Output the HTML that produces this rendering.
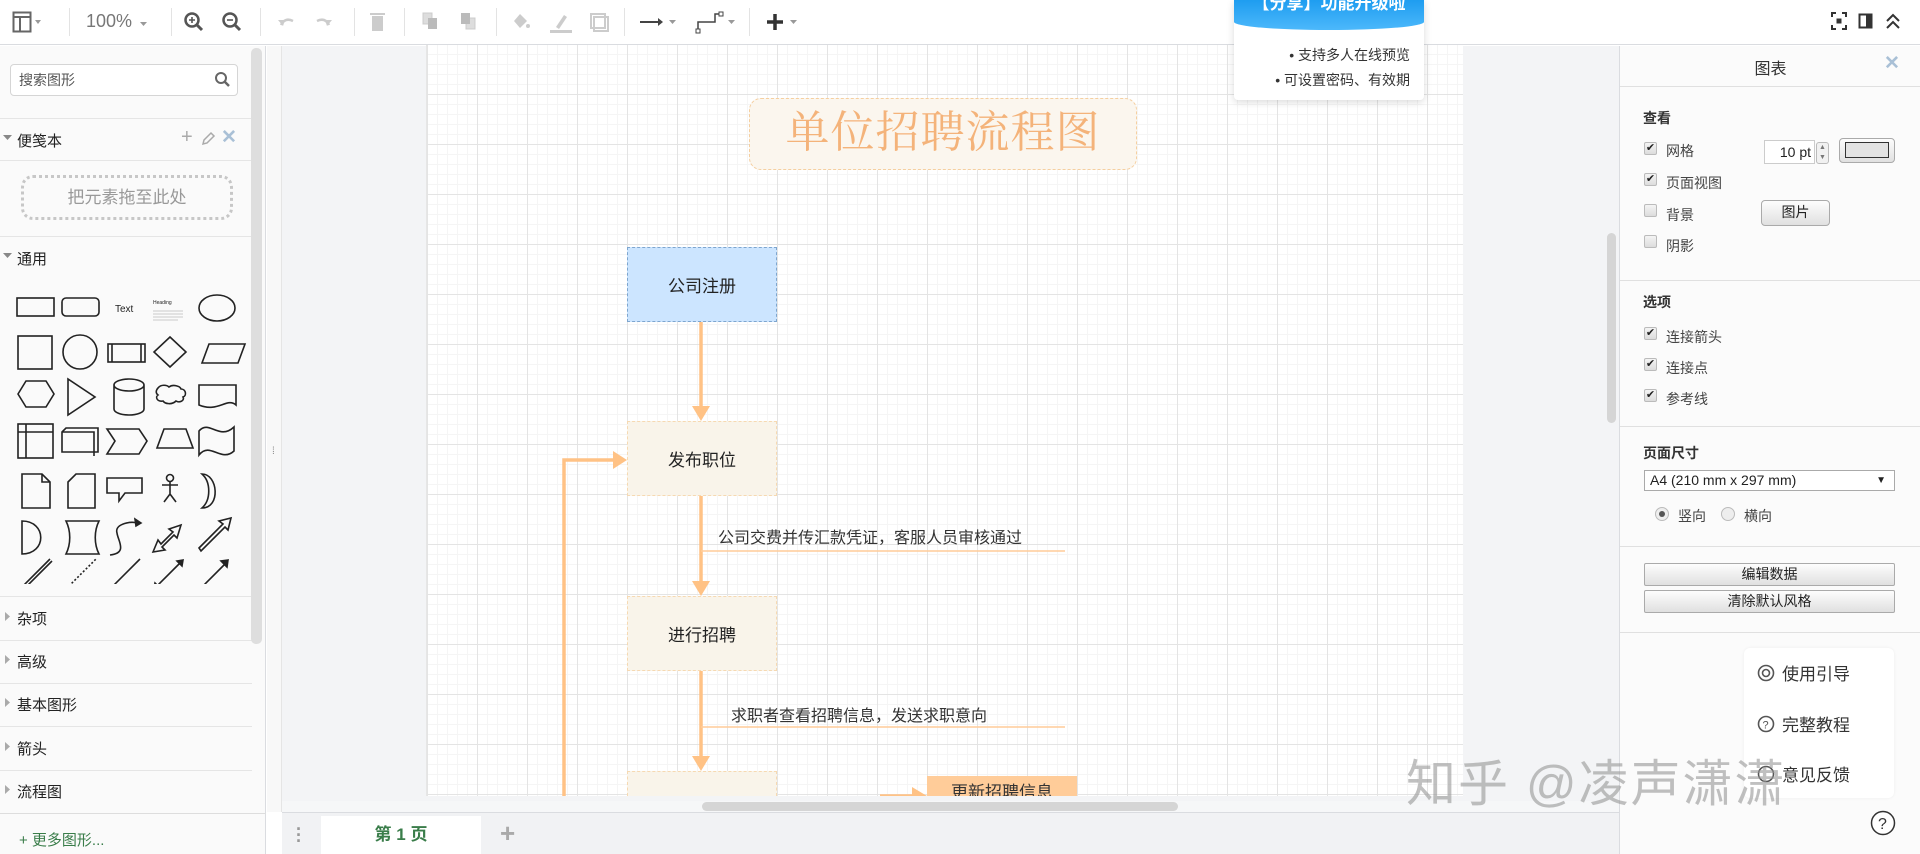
<!DOCTYPE html>
<html><head><meta charset="utf-8">
<style>
*{box-sizing:border-box;margin:0;padding:0}
body{width:1920px;height:854px;overflow:hidden;position:relative;background:#fff;font-family:"Liberation Sans","Noto Sans CJK SC",sans-serif;font-size:15px;color:#333}
.a{position:absolute}
.tb{left:0;top:0;width:1920px;height:45px;background:#fff;border-bottom:1px solid #dadce0}
.sep{position:absolute;top:8px;width:1px;height:28px;background:#e3e3e3}
.ic{position:absolute;top:10px}
.side{left:0;top:46px;width:266px;height:808px;background:#fafafa;border-right:1px solid #dadce0}
.hl{position:absolute;left:0;width:252px;height:1px;background:#e5e5e5}
.sec{position:absolute;left:17px;font-size:15px;color:#222}
.canvasbg{left:267px;top:46px;width:1352px;height:766px;background:#f3f4f6}
.page{left:426px;top:45px;width:1037px;height:751px;background-color:#fff;
background-image:linear-gradient(#e4e4e4 1px,transparent 1px),linear-gradient(90deg,#e4e4e4 1px,transparent 1px),linear-gradient(#f5f5f5 1px,transparent 1px),linear-gradient(90deg,#f5f5f5 1px,transparent 1px);
background-size:50px 50px,50px 50px,10px 10px,10px 10px;background-position:0 -1px,0 0,0 -1px,0 0;border-left:1px solid #e6e6e6}
.box{position:absolute;width:150px;height:75px;display:flex;align-items:center;justify-content:center;font-size:17px;color:#222}
.rp{left:1619px;top:46px;width:301px;height:808px;background:#fbfbfb;border-left:1px solid #dadce0}
.rl{position:absolute;left:0;width:301px;height:1px;background:#e0e0e0}
.cb{position:absolute;width:13px;height:13px;border:1px solid #bbb;border-radius:2px;background:linear-gradient(#f4f4f4,#dcdcdc);font-size:11px;line-height:11px;text-align:center;color:#222}
.lab{position:absolute;font-size:14px;color:#444}
.btn{position:absolute;border:1px solid #aaa;border-radius:2px;background:linear-gradient(#fdfdfd,#e0e0e0);font-size:14px;text-align:center;color:#222}
</style></head><body>

<div class="a tb">
<svg class="ic" style="left:12px" width="30" height="24" viewBox="0 0 30 24"><rect x="1.5" y="2.5" width="17" height="19" fill="none" stroke="#666" stroke-width="2"/><line x1="1" y1="7" x2="18" y2="7" stroke="#666" stroke-width="2"/><line x1="8" y1="7" x2="8" y2="21" stroke="#666" stroke-width="2"/><path d="M23 10h6l-3 4z" fill="#999"/></svg>
<div class="sep" style="left:69px"></div>
<div class="a" style="left:86px;top:11px;font-size:18px;color:#777">100%</div>
<svg class="ic" style="left:138px" width="12" height="24"><path d="M2 12h7l-3.5 4z" fill="#999"/></svg>
<div class="sep" style="left:171px"></div>
<svg class="ic" style="left:183px" width="22" height="24" viewBox="0 0 22 24"><circle cx="9" cy="10" r="6.5" fill="none" stroke="#555" stroke-width="2.5"/><line x1="13.5" y1="14.5" x2="19" y2="20" stroke="#555" stroke-width="3"/><path d="M6 10h6M9 7v6" stroke="#555" stroke-width="1.6"/></svg>
<svg class="ic" style="left:221px" width="22" height="24" viewBox="0 0 22 24"><circle cx="9" cy="10" r="6.5" fill="none" stroke="#555" stroke-width="2.5"/><line x1="13.5" y1="14.5" x2="19" y2="20" stroke="#555" stroke-width="3"/><path d="M6 10h6" stroke="#555" stroke-width="1.6"/></svg>
<div class="sep" style="left:260px"></div>
<svg class="ic" style="left:275px" width="22" height="24"><path d="M6 15 Q10 7 18 11" fill="none" stroke="#ccc" stroke-width="2.5"/><path d="M3 10l5 6 2-6z" fill="#ccc"/></svg>
<svg class="ic" style="left:313px" width="22" height="24"><path d="M16 15 Q12 7 4 11" fill="none" stroke="#ccc" stroke-width="2.5"/><path d="M19 10l-5 6-2-6z" fill="#ccc"/></svg>
<div class="sep" style="left:354px"></div>
<svg class="ic" style="left:368px" width="20" height="24"><rect x="4" y="6" width="11" height="15" fill="#ccc"/><rect x="2" y="3" width="15" height="2" fill="#ccc"/></svg>
<div class="sep" style="left:404px"></div>
<svg class="ic" style="left:420px" width="22" height="24"><rect x="3" y="3" width="9" height="11" fill="#ddd" stroke="#ccc"/><rect x="8" y="8" width="9" height="11" fill="#bbb"/></svg>
<svg class="ic" style="left:458px" width="22" height="24"><rect x="8" y="8" width="9" height="11" fill="#ddd" stroke="#ccc"/><rect x="3" y="3" width="9" height="11" fill="#bbb"/></svg>
<div class="sep" style="left:496px"></div>
<svg class="ic" style="left:510px" width="22" height="24"><path d="M4 11l6-7 7 7-7 7z" fill="#ccc"/><circle cx="18" cy="16" r="2" fill="#ccc"/></svg>
<svg class="ic" style="left:548px" width="26" height="24"><path d="M8 17l8-12 3 2-8 12z" fill="#ccc"/><rect x="2" y="20" width="22" height="3" fill="#ccc"/></svg>
<svg class="ic" style="left:588px" width="22" height="24"><rect x="3" y="4" width="14" height="14" fill="none" stroke="#ccc" stroke-width="2"/><rect x="6" y="7" width="14" height="14" fill="none" stroke="#ccc" stroke-width="2"/></svg>
<div class="sep" style="left:624px"></div>
<svg class="ic" style="left:638px" width="44" height="24"><line x1="2" y1="12" x2="20" y2="12" stroke="#444" stroke-width="2"/><path d="M20 8l5 4-5 4z" fill="#444"/><path d="M31 10h7l-3.5 4z" fill="#999"/></svg>
<svg class="ic" style="left:694px" width="46" height="26"><path d="M4 22v-10h17v-8h6" fill="none" stroke="#444" stroke-width="1.5"/><rect x="2" y="19" width="4" height="4" fill="#fff" stroke="#444"/><rect x="25" y="2" width="4" height="4" fill="#fff" stroke="#444"/><path d="M34 10h7l-3.5 4z" fill="#999"/></svg>
<div class="sep" style="left:749px"></div>
<svg class="ic" style="left:764px" width="42" height="24"><path d="M11 4v16M3 12h16" stroke="#333" stroke-width="3.5"/><path d="M26 10h7l-3.5 4z" fill="#999"/></svg>
<svg class="ic" style="left:1830px" width="18" height="24"><path d="M2 7V3h4M12 3h4v4M16 15v4h-4M6 19H2v-4" fill="none" stroke="#333" stroke-width="2"/><rect x="6.5" y="8.5" width="5" height="5" fill="#333"/></svg>
<svg class="ic" style="left:1857px" width="18" height="24"><rect x="2.5" y="4.5" width="12" height="13" fill="none" stroke="#333" stroke-width="2"/><rect x="9" y="4" width="6" height="14" fill="#333"/></svg>
<svg class="ic" style="left:1884px" width="18" height="24"><path d="M3 11l6-6 6 6M3 18l6-6 6 6" fill="none" stroke="#333" stroke-width="2"/></svg>
</div>

<div class="a side">
<div class="a" style="left:10px;top:18px;width:228px;height:32px;border:1px solid #d5d5d5;border-radius:4px;background:#fff"></div>
<div class="a" style="left:19px;top:24px;font-size:14px;color:#555">搜索图形</div>
<svg class="a" style="left:214px;top:25px" width="18" height="18"><circle cx="7" cy="7" r="5" fill="none" stroke="#666" stroke-width="2"/><line x1="10.5" y1="10.5" x2="15" y2="15" stroke="#666" stroke-width="2.5"/></svg>
<div class="hl" style="top:72px"></div>
<svg class="a" style="left:3px;top:88px" width="10" height="8"><path d="M0 1h9l-4.5 5z" fill="#888"/></svg>
<div class="sec" style="top:84px">便笺本</div>
<div class="a" style="left:181px;top:80px;font-size:20px;color:#aaa">+</div>
<svg class="a" style="left:200px;top:85px" width="16" height="16"><path d="M3 13l1-4 7-7 3 3-7 7z" fill="none" stroke="#aaa" stroke-width="1.5"/></svg>
<div class="a" style="left:221px;top:80px;font-size:19px;color:#a9c0d6;font-weight:bold">✕</div>
<div class="hl" style="top:114px"></div>
<div class="a" style="left:21px;top:129px;width:212px;height:45px;border:3px dotted #c7c7c7;border-radius:12px;text-align:center;line-height:39px;font-size:17px;color:#999">把元素拖至此处</div>
<div class="hl" style="top:190px"></div>
<svg class="a" style="left:3px;top:206px" width="10" height="8"><path d="M0 1h9l-4.5 5z" fill="#888"/></svg>
<div class="sec" style="top:202px">通用</div>
<svg class="a" style="left:10px;top:238px" width="245" height="300" viewBox="0 0 245 300" fill="none" stroke="#222" stroke-width="1.6">
<rect x="7" y="14" width="37" height="18"/><rect x="52" y="14" width="37" height="18" rx="4"/>
<text x="105" y="28" font-family="Liberation Sans" font-size="10" fill="#222" stroke="none">Text</text>
<text x="143" y="20" font-family="Liberation Sans" font-size="5" fill="#222" stroke="none">Heading</text>
<path d="M143 27h30M143 30h30M143 33h30M143 36h25" stroke="#bbb" stroke-width="0.8"/>
<ellipse cx="207" cy="24" rx="18" ry="13"/>
<rect x="8" y="52" width="34" height="33"/><circle cx="70" cy="68" r="17"/><rect x="98" y="60" width="37" height="18"/><path d="M102 60v18M131 60v18"/>
<path d="M160 53l16 15-16 15-16-15z"/><path d="M199 60h36l-7 19h-36z"/>
<path d="M8 110l8-13h20l8 13-8 13h-20z"/><path d="M58 95v36l27-18z"/><path d="M104 101v24a15 6 0 0 0 30 0v-24a15 6 0 0 0-30 0a15 6 0 0 0 30 0"/>
<path d="M148 104c3-4 9-3 11-1 4-3 11-1 12 2 5 0 6 7 2 8 2 4-4 6-7 4-4 4-11 3-13 0-6 1-8-4-5-6-4-3 0-7 0-7z"/><path d="M189 101h37v20c-9-8-18 8-37 0z"/>
<rect x="8" y="140" width="35" height="34"/><path d="M8 148h35M16 140v34"/><path d="M52 148l4-4h32v24h-36z"/><path d="M52 148h32v24" /><path d="M97 145h32l8 12-8 13h-32l8-13z"/><path d="M154 145h22l7 19h-36z"/><path d="M189 147c10-12 20 10 35-4v24c-13 12-24-10-35 4z"/>
<path d="M12 190v34h28v-26l-8-8z"/><path d="M32 190v8h8"/><path d="M58 198l8-8h19v34h-27z"/><path d="M97 194h35v15h-17l-6 8v-8h-12z"/><circle cx="160" cy="194" r="3.5"/><path d="M160 198v12M152 201h16M160 210l-6 8M160 210l6 8"/><path d="M192 190c16 0 19 34 0 34 9-8 9-26 0-34z"/>
<path d="M12 237c25 0 25 33 0 33z"/><path d="M56 237h33c-5 10-5 23 0 33h-33c5-10 5-23 0-33z"/><path d="M100 271c18-2 8-14 7-22-3-10 17-12 19-10"/><path d="M131 239l-6-4 1 7z" fill="#222"/>
<path d="M143 268l5-12 3 4 12-12-4-3 12-4-4 13-3-3-12 12 3 3z"/><path d="M189 264l24-24-4-3 12-3-3 12-3-3-24 24z"/>
<path d="M10 305l30-30M12 307l30-30"/><path d="M56 305l30-30" stroke-dasharray="2 2"/><path d="M100 305l30-30"/><path d="M146 303l25-25"/><path d="M144 305l6-1-5-5zM173 276l-6 1 5 5z" fill="#222"/><path d="M190 305l25-25"/><path d="M218 276l-7 1 6 6z" fill="#222"/>
</svg>
<div class="hl" style="top:550px"></div>
<svg class="a" style="left:5px;top:566px" width="6" height="10"><path d="M0 0v9l5-4.5z" fill="#aaa"/></svg><div class="sec" style="top:562px">杂项</div>
<div class="hl" style="top:594px"></div>
<svg class="a" style="left:5px;top:609px" width="6" height="10"><path d="M0 0v9l5-4.5z" fill="#aaa"/></svg><div class="sec" style="top:605px">高级</div>
<div class="hl" style="top:637px"></div>
<svg class="a" style="left:5px;top:652px" width="6" height="10"><path d="M0 0v9l5-4.5z" fill="#aaa"/></svg><div class="sec" style="top:648px">基本图形</div>
<div class="hl" style="top:680px"></div>
<svg class="a" style="left:5px;top:696px" width="6" height="10"><path d="M0 0v9l5-4.5z" fill="#aaa"/></svg><div class="sec" style="top:692px">箭头</div>
<div class="hl" style="top:724px"></div>
<svg class="a" style="left:5px;top:739px" width="6" height="10"><path d="M0 0v9l5-4.5z" fill="#aaa"/></svg><div class="sec" style="top:735px">流程图</div>
<div class="a" style="left:0;top:767px;width:266px;height:1px;background:#ddd"></div>
<div class="a" style="left:19px;top:783px;font-size:15px;color:#3a7d4a">+ 更多图形...</div>
<div class="a" style="left:251px;top:2px;width:11px;height:596px;background:#dedede;border-radius:5px"></div>
</div>

<div class="a canvasbg"></div>
<div class="a" style="left:267px;top:46px;width:15px;height:766px;background:#f8f8f8;border-right:1px solid #e5e5e5"></div>
<div class="a" style="left:272px;top:446px;font-size:10px;color:#888">⁞</div>
<div class="a page"></div>

<svg class="a" style="left:426px;top:45px" width="1037" height="751" viewBox="426 45 1037 751">
<g stroke="#ffc285" stroke-width="3.5" fill="none">
<path d="M701 322V410"/><path d="M701 496V585"/><path d="M701 671V760"/>
<path d="M564 796V460H615"/><path d="M880 796h35"/>
</g>
<g fill="#ffc285">
<path d="M692 406l9 15 9-15z"/><path d="M692 581l9 15 9-15z"/><path d="M692 756l9 15 9-15z"/><path d="M613 451l14 9-14 9z"/><path d="M912 787l15 9-15 9z"/>
</g>
<path d="M701 551H1065M701 727H1065" stroke="#ffcc99" stroke-width="1.5"/>
</svg>

<div class="a" style="left:749px;top:98px;width:388px;height:72px;border:1.5px dashed #f5cfa0;border-radius:12px;background:#fbf6ee;text-align:center;line-height:68px;font-family:'Liberation Serif','Noto Serif CJK SC',serif;font-size:44px;color:#f4b37a;letter-spacing:1px">单位招聘流程图</div>
<div class="box" style="left:627px;top:247px;background:#cce5ff;border:1.5px dashed #7ea6cf">公司注册</div>
<div class="box" style="left:627px;top:421px;background:#f9f4ea;border:1.5px dashed #f6d9b2">发布职位</div>
<div class="box" style="left:627px;top:596px;background:#f9f4ea;border:1.5px dashed #f6d9b2">进行招聘</div>
<div class="box" style="left:627px;top:771px;height:25px;background:#f9f4ea;border:1.5px dashed #f6d9b2;border-bottom:none"></div>
<div class="a" style="left:927px;top:776px;width:150px;height:20px;background:#ffcc99;overflow:hidden;text-align:center;font-size:17px;line-height:34px;color:#333">更新招聘信息</div>
<div class="a" style="left:718px;top:524px;font-size:16px;color:#333">公司交费并传汇款凭证，客服人员审核通过</div>
<div class="a" style="left:731px;top:702px;font-size:16px;color:#333">求职者查看招聘信息，发送求职意向</div>

<div class="a" style="left:1607px;top:233px;width:9px;height:190px;background:#d5d5d5;border-radius:5px"></div>
<div class="a" style="left:282px;top:801px;width:1337px;height:11px;background:#f6f7f8"></div>
<div class="a" style="left:702px;top:802px;width:476px;height:9px;background:#d5d5d5;border-radius:5px"></div>

<div class="a" style="left:282px;top:812px;width:1337px;height:42px;background:#f1f2f4;border-top:1px solid #dadce0"></div>
<div class="a" style="left:296px;top:826px;font-size:18px;color:#999;font-weight:bold;line-height:6px">·<br>·<br>·</div>
<div class="a" style="left:321px;top:816px;width:160px;height:38px;background:#fff;text-align:center;line-height:38px;font-size:17px;color:#3a7d4a;font-weight:bold">第 1 页</div>
<div class="a" style="left:500px;top:818px;font-size:26px;color:#aaa;font-weight:bold">+</div>

<div class="a" style="left:1234px;top:0;width:190px;height:100px;background:#fff;box-shadow:0 2px 8px rgba(0,0,0,0.15);border-radius:0 0 4px 4px"></div>
<div class="a" style="left:1234px;top:0;width:190px;height:30px;background:linear-gradient(#1e9df0,#4cb8fb);border-radius:0 0 50% 50%/0 0 8px 8px;overflow:hidden"><div style="position:absolute;top:-11px;width:190px;text-align:center;color:#fff;font-weight:bold;font-size:17px">【分享】功能升级啦</div></div>
<div class="a" style="left:1234px;top:43px;width:176px;text-align:right;font-size:14px;color:#333;line-height:25px">• 支持多人在线预览<br>• 可设置密码、有效期</div>

<div class="a rp">
<div class="a" style="left:0;top:9px;width:301px;text-align:center;font-size:16px;color:#333">图表</div>
<div class="a" style="left:264px;top:6px;font-size:19px;color:#a9c0d6;font-weight:bold">✕</div>
<div class="rl" style="top:40px"></div>
<div class="lab" style="left:23px;top:62px;font-weight:bold;color:#333">查看</div>
<div class="cb" style="left:24px;top:96px">✔</div><div class="lab" style="left:46px;top:95px">网格</div>
<div class="cb" style="left:24px;top:127px">✔</div><div class="lab" style="left:46px;top:127px">页面视图</div>
<div class="cb" style="left:24px;top:158px"></div><div class="lab" style="left:46px;top:159px">背景</div>
<div class="cb" style="left:24px;top:189px"></div><div class="lab" style="left:46px;top:190px">阴影</div>
<div class="a" style="left:144px;top:94px;width:51px;height:24px;border:1px solid #ccc;background:#fff;font-size:14px;text-align:right;padding-right:3px;line-height:22px;color:#222">10 pt</div>
<div class="a" style="left:196px;top:96px;width:13px;height:22px;border:1px solid #bbb;border-radius:3px;background:#f1f1f1;font-size:7px;line-height:10px;text-align:center;color:#777">▲<br>▼</div>
<div class="btn" style="left:219px;top:92px;width:56px;height:25px;border-radius:4px"><div style="margin:3px 5px;height:16px;border:1px solid #333;background:#e3e3e3"></div></div>
<div class="btn" style="left:141px;top:154px;width:69px;height:26px;line-height:23px;border-radius:4px">图片</div>
<div class="rl" style="top:234px"></div>
<div class="lab" style="left:23px;top:246px;font-weight:bold;color:#333">选项</div>
<div class="cb" style="left:24px;top:281px">✔</div><div class="lab" style="left:46px;top:281px">连接箭头</div>
<div class="cb" style="left:24px;top:312px">✔</div><div class="lab" style="left:46px;top:312px">连接点</div>
<div class="cb" style="left:24px;top:343px">✔</div><div class="lab" style="left:46px;top:343px">参考线</div>
<div class="rl" style="top:380px"></div>
<div class="lab" style="left:23px;top:397px;font-weight:bold;color:#333">页面尺寸</div>
<div class="a" style="left:24px;top:424px;width:251px;height:21px;border:1px solid #aaa;background:#fff;font-size:14px;line-height:19px;padding-left:5px;color:#222">A4 (210 mm x 297 mm)<span style="position:absolute;right:8px;font-size:10px">▼</span></div>
<div class="a" style="left:35px;top:461px;width:14px;height:14px;border:1px solid #bbb;border-radius:50%;background:#eee"><div style="margin:3px;width:6px;height:6px;border-radius:50%;background:#555"></div></div>
<div class="lab" style="left:58px;top:460px">竖向</div>
<div class="a" style="left:101px;top:461px;width:14px;height:14px;border:1px solid #bbb;border-radius:50%;background:#eee"></div>
<div class="lab" style="left:124px;top:460px">横向</div>
<div class="rl" style="top:500px"></div>
<div class="btn" style="left:24px;top:517px;width:251px;height:23px;line-height:21px">编辑数据</div>
<div class="btn" style="left:24px;top:544px;width:251px;height:23px;line-height:21px">清除默认风格</div>
<div class="rl" style="top:586px"></div>
<div class="a" style="left:124px;top:602px;width:150px;height:150px;background:#fff;border-radius:6px;box-shadow:0 0 3px rgba(0,0,0,0.06)"></div>
<svg class="a" style="left:137px;top:618px" width="18" height="18"><circle cx="9" cy="9" r="7.5" fill="none" stroke="#555" stroke-width="1.6"/><circle cx="9" cy="9" r="3.5" fill="none" stroke="#555" stroke-width="1.6"/></svg>
<div class="a" style="left:162px;top:614px;font-size:17px;color:#333">使用引导</div>
<svg class="a" style="left:137px;top:669px" width="18" height="18"><circle cx="9" cy="9" r="7.5" fill="none" stroke="#555" stroke-width="1.6"/><text x="5.5" y="13.5" font-size="11" fill="#555" font-family="Liberation Sans">?</text></svg>
<div class="a" style="left:162px;top:665px;font-size:17px;color:#333">完整教程</div>
<svg class="a" style="left:137px;top:719px" width="18" height="18"><circle cx="9" cy="9" r="7.5" fill="none" stroke="#555" stroke-width="1.6"/></svg>
<div class="a" style="left:162px;top:715px;font-size:17px;color:#333">意见反馈</div>
<svg class="a" style="left:250px;top:764px" width="26" height="26"><circle cx="13" cy="13" r="11.5" fill="#fff" stroke="#333" stroke-width="1.5"/><text x="8" y="19" font-size="16" fill="#333" font-family="Liberation Sans">?</text></svg>
</div>

<div class="a" style="left:1406px;top:744px;font-size:50px;color:rgba(150,150,150,0.6);letter-spacing:2px;white-space:nowrap">知乎 @凌声潇潇</div>

</body></html>
